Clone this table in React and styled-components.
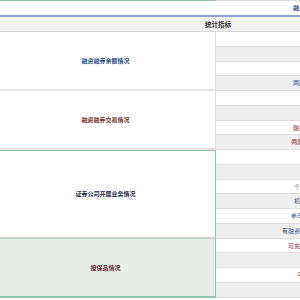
import React from 'react';
import styled, { createGlobalStyle } from 'styled-components';

const GlobalStyle = createGlobalStyle`
  html, body {
    margin: 0;
    padding: 0;
    background: #ffffff;
    overflow: hidden;
  }
  body {
    font-family: "Noto Sans CJK SC", "Noto Sans", sans-serif;
  }
`;

const tone = {
  blue: '#2c4f8c',
  red: '#7d3030',
  navy: '#1e2c4a',
  brown: '#6e3434',
};

const sections = [
  {
    title: '融资融券余额情况',
    color: tone.blue,
    rows: ['融资余额', '融券余额', '融资融券余额', '两融余额占流通市值比例'],
  },
  {
    title: '融资融券交易情况',
    color: tone.red,
    rows: ['融资买入额', '融券卖出量', '融资买入额占成交额比例', '两融交易额占A股成交额比'],
  },
  {
    title: '证券公司开展业务情况',
    color: tone.navy,
    rowColor: tone.blue,
    variant: 'outlined',
    rows: [
      '证券公司数量',
      '营业部数量',
      '个人投资者账户数量(万)',
      '机构投资者账户数量(户)',
      '参与交易的投资者数量(万)',
      '有融资融券负债的投资者数量(万)',
    ],
  },
  {
    title: '担保品情况',
    color: tone.brown,
    rowColor: tone.red,
    variant: 'tinted',
    rows: ['可充抵保证金证券市值(亿元)', '担保物总价值', '平均维持担保比例(%)', '折算率'],
  },
];

const ROW_H = 14.75;

const Table = styled.div`
  width: 436px;
  display: flex;
  flex-direction: column;
`;

const CaptionRow = styled.div`
  display: grid;
  grid-template-columns: 216px 220px;
  height: 15px;
  border-bottom: 2px solid #93a1cb;

  .lead {
    border-top: 1px solid #8fc4a6;
  }
  .title {
    border-top: 1px solid #dcdcdc;
    font-size: 6px;
    line-height: 14px;
    text-align: center;
    color: ${tone.blue};
    font-weight: 600;
  }
`;

const HeadRow = styled.div`
  height: 14px;
  background: #f2f2f2;
  border-bottom: 1px solid #dadada;
  font-size: 6.5px;
  line-height: 14px;
  font-weight: 600;
  text-align: center;
  color: #333333;
`;

const Section = styled.div`
  display: grid;
  grid-template-columns: 216px 220px;
`;

const Label = styled.div`
  display: flex;
  align-items: center;
  justify-content: center;
  box-sizing: border-box;
  font-size: 6px;
  font-weight: 600;
  color: ${(p) => p.$color};
  background: ${(p) => (p.$variant === 'tinted' ? '#e5efe8' : '#ffffff')};
  border-right: 1px solid
    ${(p) => (p.$variant ? '#8fc4a6' : '#dcdcdc')};
  border-bottom: 2px solid
    ${(p) => (p.$variant === 'tinted' ? '#8fc4a6' : p.$variant ? '#c9d1cd' : '#e2e2e2')};
  border-top: ${(p) => (p.$variant === 'outlined' ? '1px solid #8fc4a6' : '0')};
  padding-right: 4px;
`;

const Rows = styled.div`
  display: flex;
  flex-direction: column;
`;

const Cell = styled.div`
  box-sizing: border-box;
  height: ${ROW_H}px;
  border-bottom: 1px solid #dcdcdc;
  background: ${(p) => (p.$shade ? '#efefef' : '#ffffff')};
  font-size: 6px;
  line-height: ${ROW_H - 1}px;
  text-align: center;
  white-space: nowrap;
  color: ${(p) => p.$color};
`;

export default function App() {
  let index = 0;
  return (
    <>
      <GlobalStyle />
      <Table>
        <CaptionRow>
          <div className="lead" />
          <div className="title">融资融券业务统计数据表</div>
        </CaptionRow>
        <HeadRow>统计指标</HeadRow>
        {sections.map((s) => (
          <Section key={s.title}>
            <Label $color={s.color} $variant={s.variant}>
              {s.title}
            </Label>
            <Rows>
              {s.rows.map((r) => {
                const shade = index % 2 === 1;
                index += 1;
                return (
                  <Cell key={r} $shade={shade} $color={s.rowColor || s.color}>
                    {r}
                  </Cell>
                );
              })}
            </Rows>
          </Section>
        ))}
      </Table>
    </>
  );
}
